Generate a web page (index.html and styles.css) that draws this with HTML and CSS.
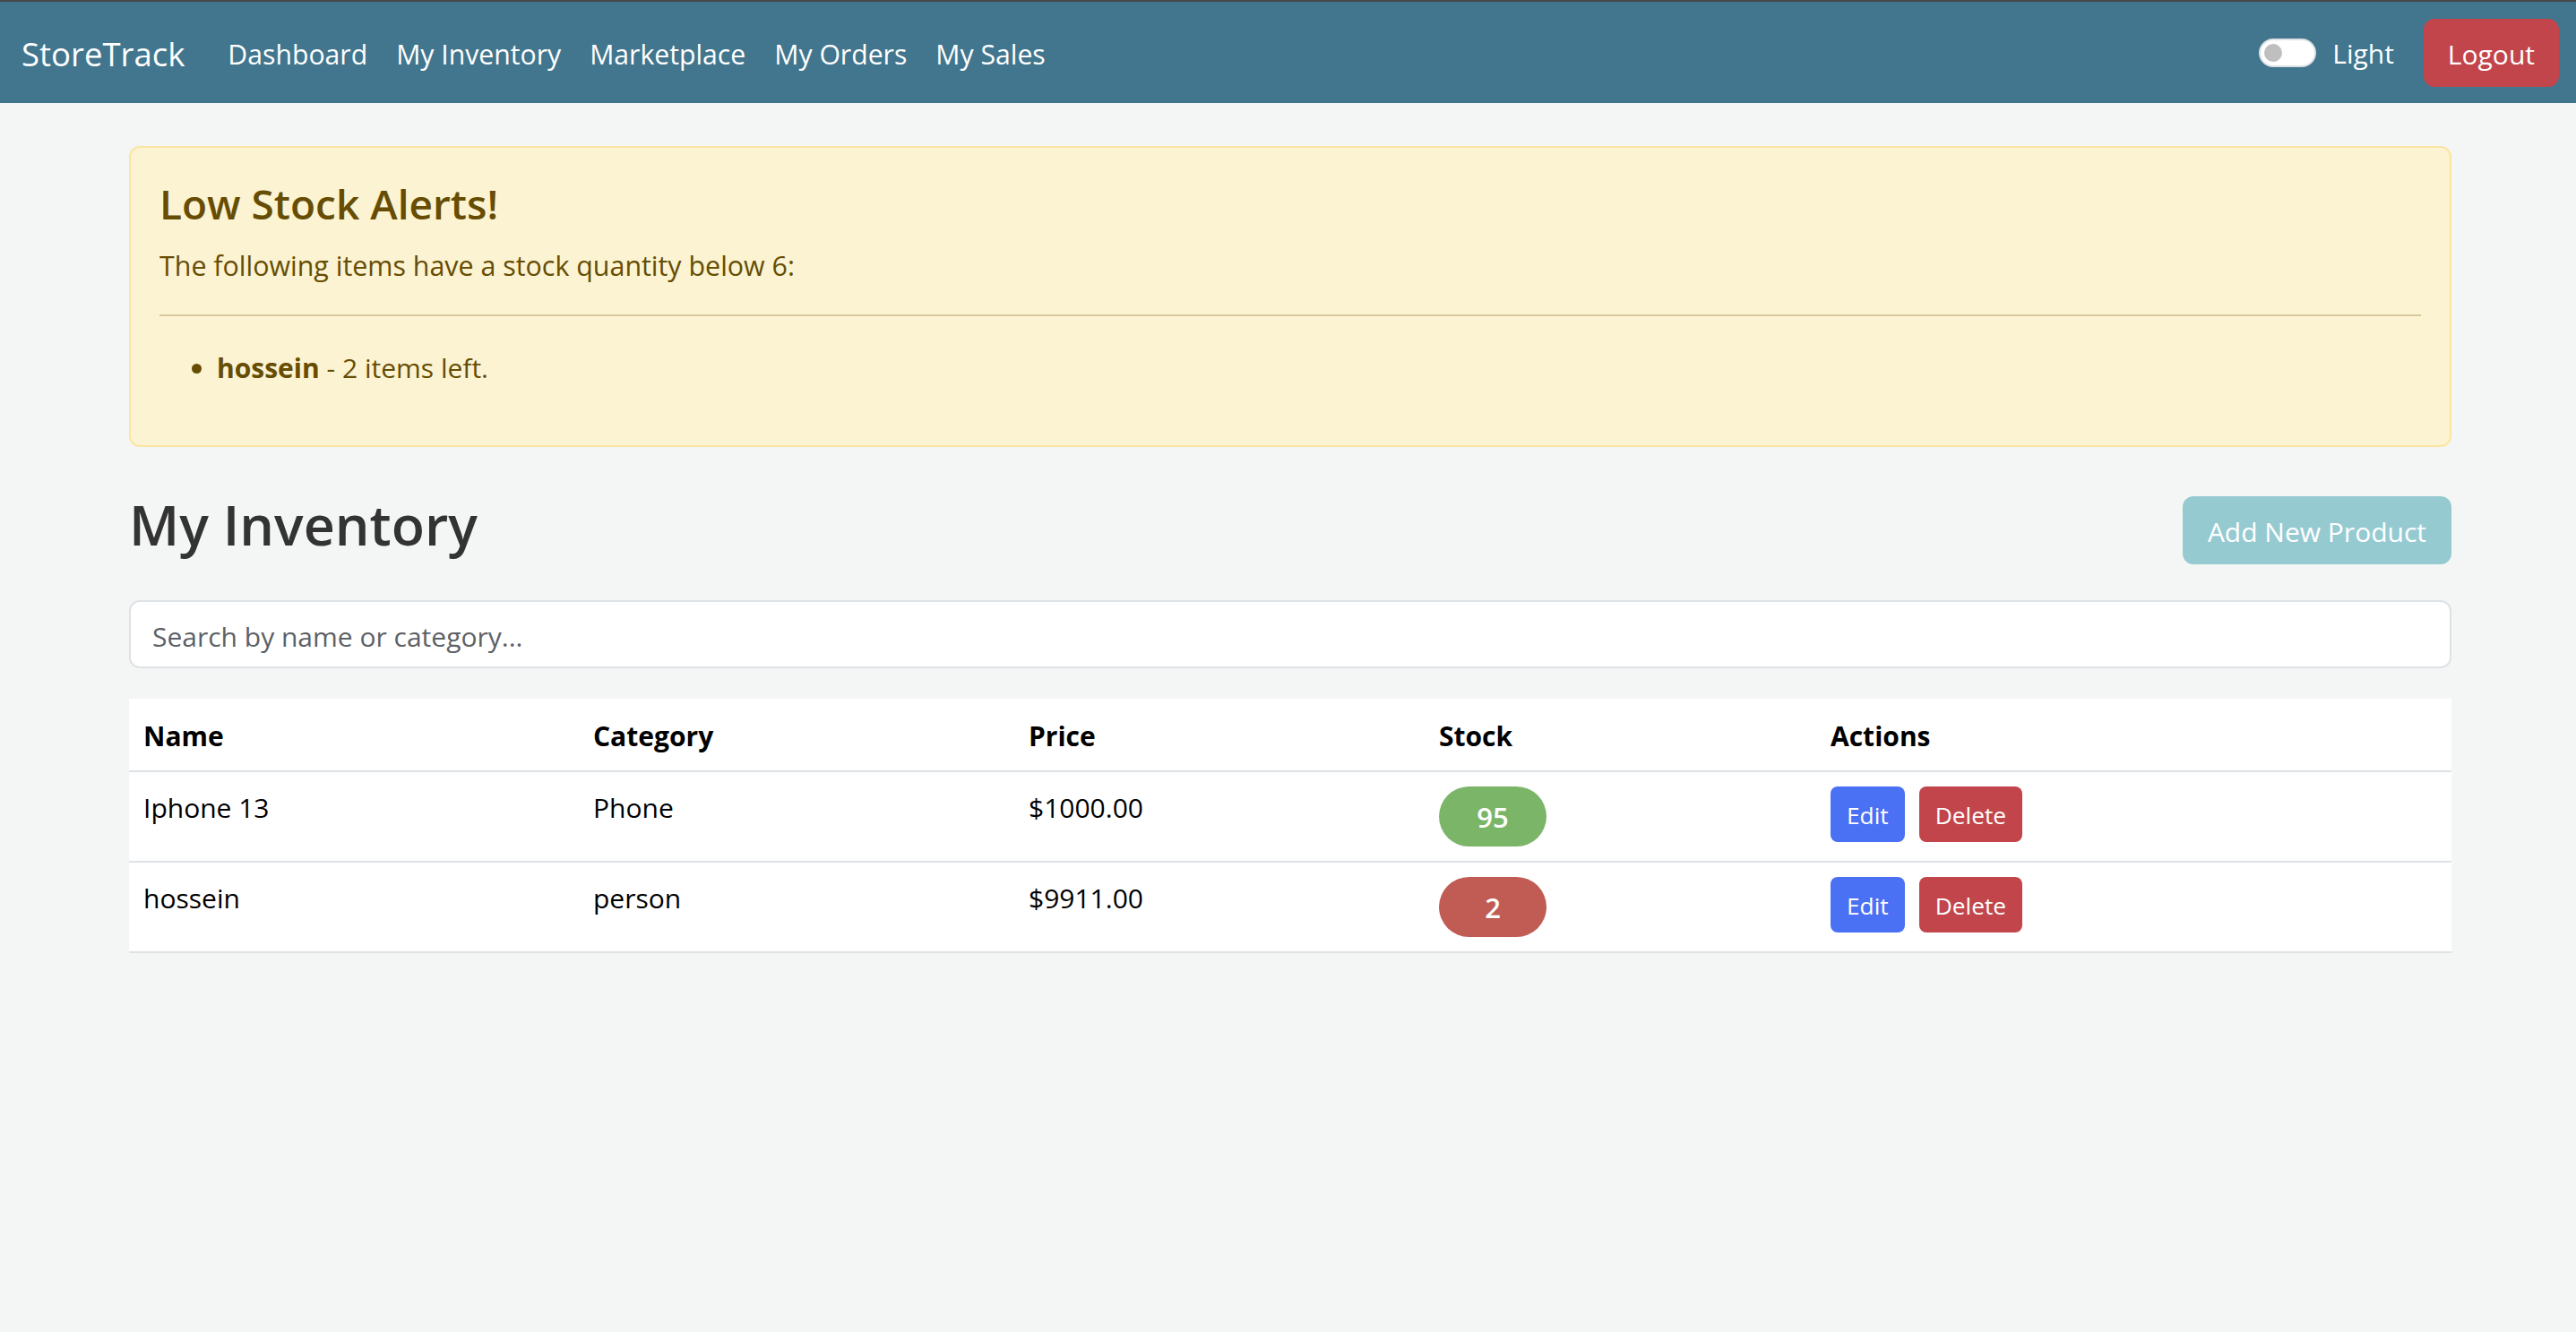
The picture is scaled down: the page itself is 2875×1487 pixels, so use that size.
FILE: index.html
```html
<!DOCTYPE html>
<html lang="en">
<head>
<meta charset="utf-8">
<title>StoreTrack - My Inventory</title>
<link rel="stylesheet" href="styles.css">
</head>
<body>
<nav class="navbar">
  <a class="brand" href="#">StoreTrack</a>
  <ul class="nav-links">
    <li><a href="#">Dashboard</a></li>
    <li><a href="#">My Inventory</a></li>
    <li><a href="#">Marketplace</a></li>
    <li><a href="#">My Orders</a></li>
    <li><a href="#">My Sales</a></li>
  </ul>
  <div class="nav-right">
    <label class="theme-switch">
      <span class="switch-track"><span class="switch-knob"></span></span>
      <span class="switch-label">Light</span>
    </label>
    <button class="btn btn-logout">Logout</button>
  </div>
</nav>

<main class="container">
  <div class="alert">
    <h4 class="alert-heading">Low Stock Alerts!</h4>
    <p class="alert-text">The following items have a stock quantity below 6:</p>
    <hr class="alert-rule">
    <ul class="alert-list">
      <li><strong>hossein</strong> - 2 items left.</li>
    </ul>
  </div>

  <div class="page-head">
    <h2 class="page-title">My Inventory</h2>
    <button class="btn btn-add">Add New Product</button>
  </div>

  <input class="search" type="text" placeholder="Search by name or category...">

  <table class="inv-table">
    <colgroup>
      <col class="col-name">
      <col class="col-cat">
      <col class="col-price">
      <col class="col-stock">
      <col class="col-act">
    </colgroup>
    <thead>
      <tr>
        <th>Name</th>
        <th>Category</th>
        <th>Price</th>
        <th>Stock</th>
        <th>Actions</th>
      </tr>
    </thead>
    <tbody>
      <tr>
        <td>Iphone 13</td>
        <td>Phone</td>
        <td>$1000.00</td>
        <td><span class="stock stock-ok">95</span></td>
        <td><div class="actions"><button class="btn-sm btn-edit">Edit</button><button class="btn-sm btn-delete">Delete</button></div></td>
      </tr>
      <tr>
        <td>hossein</td>
        <td>person</td>
        <td>$9911.00</td>
        <td><span class="stock stock-low">2</span></td>
        <td><div class="actions"><button class="btn-sm btn-edit">Edit</button><button class="btn-sm btn-delete">Delete</button></div></td>
      </tr>
    </tbody>
  </table>
</main>
</body>
</html>
```

FILE: styles.css
```css
html {
  overflow: hidden;
  background: #f4f6f6;
}

body {
  margin: 0;
  width: 2880px;
  font-family: "Open Sans", "Noto Sans", sans-serif;
  font-size: 30px;
  line-height: 48px;
  color: #111;
  background: #f4f6f6;
}

/* ---------- navbar ---------- */
.navbar {
  display: flex;
  align-items: center;
  height: 113px;
  padding: 0 24px;
  background: #41768e;
  border-top: 2px solid #484848;
}

.brand {
  font-size: 36.5px;
  line-height: 60px;
  color: #fff;
  text-decoration: none;
  margin-right: 32px;
  padding-top: 2px;
}

.nav-links {
  display: flex;
  list-style: none;
  margin: 0;
  padding: 0;
}

.nav-links a {
  display: block;
  padding: 18px 16px 14px;
  font-size: 30.2px;
  color: #fff;
  text-decoration: none;
}

.nav-right {
  margin-left: auto;
  display: flex;
  align-items: center;
}

.theme-switch {
  display: flex;
  align-items: center;
  gap: 18px;
  color: #fff;
  margin-right: 33px;
}

.switch-label {
  padding-top: 3px;
}

.switch-track {
  display: flex;
  align-items: center;
  box-sizing: border-box;
  width: 64px;
  height: 32px;
  padding-left: 4px;
  border: 2px solid #dde1e4;
  border-radius: 16px;
  background: #fff;
}

.switch-knob {
  width: 20px;
  height: 20px;
  border-radius: 50%;
  background: #bfbfbf;
}

.btn {
  font: inherit;
  line-height: 48px;
  color: #fff;
  border: none;
  border-radius: 12px;
  padding: 16px 27px 12px;
}

.btn-logout {
  background: #c2454c;
}

/* ---------- main ---------- */
.container {
  width: 2592px;
  margin: 48px auto 0;
}

.alert {
  background: #fcf3d2;
  border: 2px solid #fbe5a1;
  border-radius: 12px;
  padding: 32px;
  color: #664d03;
  margin-bottom: 47px;
}

.alert-heading {
  font-size: 46px;
  font-weight: 600;
  line-height: 57.6px;
  margin: 0 0 16px;
  padding-top: 2px;
  height: 55.6px;
}

.alert-text {
  margin: 0 0 32px;
  padding-top: 2px;
  height: 46px;
  font-size: 30.4px;
}

.alert-rule {
  border: 0;
  border-top: 2px solid #664d03;
  opacity: 0.25;
  margin: 32px 0;
}

.alert-list {
  margin: 0 0 32px;
  padding-left: 64px;
}

.alert-list li {
  padding-top: 2px;
  height: 46px;
}

.page-head {
  display: flex;
  justify-content: space-between;
  align-items: center;
  margin-bottom: 32px;
}

.page-title {
  font-size: 61px;
  font-weight: 600;
  line-height: 76.8px;
  margin: 0 0 16px;
  color: #333;
  padding-top: 2px;
  height: 74.8px;
}

.btn-add {
  background: #96cad1;
  padding-left: 28px;
  padding-right: 28px;
}

.search {
  display: block;
  box-sizing: border-box;
  width: 100%;
  height: 76px;
  padding: 14px 24px 10px;
  border: 2px solid #dee2e6;
  border-radius: 12px;
  font: inherit;
  color: #212529;
  background: #fff;
  margin: 0 0 34px;
}

.search::placeholder {
  color: #5d6166;
}

/* ---------- table ---------- */
.inv-table {
  width: 100%;
  border-collapse: collapse;
  table-layout: fixed;
  background: #fff;
}

.col-name { width: 502px; }
.col-cat { width: 486px; }
.col-price { width: 458px; }
.col-stock { width: 437px; }
.col-act { width: 709px; }

.inv-table th,
.inv-table td {
  padding: 18px 16px 14px;
  border-bottom: 2px solid #dee2e6;
  text-align: left;
  vertical-align: top;
  line-height: 48px;
  color: #000;
}

.inv-table td {
  padding-top: 16px;
  padding-bottom: 16px;
}

.inv-table th {
  font-weight: 700;
}

.stock {
  display: flex;
  align-items: center;
  justify-content: center;
  width: 120px;
  height: 67px;
  border-radius: 34px;
  color: #fff;
  font-weight: 600;
  font-size: 31px;
}

.stock-ok { background: #7bb568; }
.stock-low { background: #c15c55; }

.actions {
  display: flex;
  gap: 16px;
}

.btn-sm {
  font-family: inherit;
  font-size: 26.3px;
  line-height: 42px;
  padding: 9px 16px 7px;
  border: 2px solid transparent;
  border-radius: 8px;
  color: #fff;
}

.btn-edit { background: #4a70f4; }
.btn-delete { background: #c1454b; }
```
